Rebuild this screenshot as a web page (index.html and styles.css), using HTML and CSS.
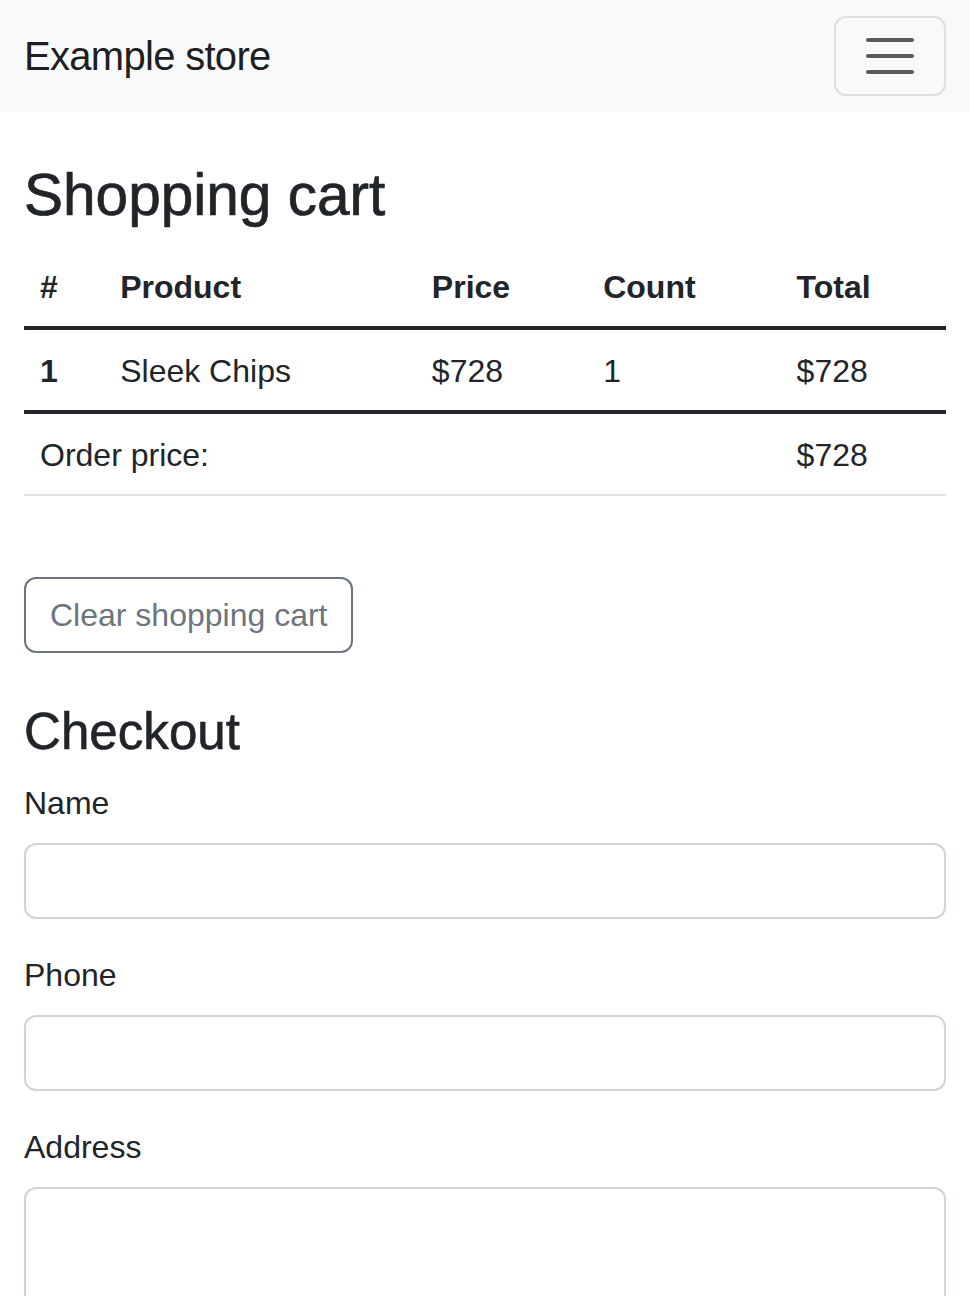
FILE: index.html
```html
<!DOCTYPE html>
<html lang="en">
<head>
<meta charset="utf-8">
<title>Example store</title>
<link rel="stylesheet" href="styles.css">
</head>
<body>
<nav class="navbar">
  <div class="nav-inner">
    <a class="brand" href="#">Example store</a>
    <button class="toggler" type="button" aria-label="Toggle navigation">
      <svg class="toggler-icon" viewBox="0 0 30 30" width="60" height="60" aria-hidden="true">
        <path d="M4 7h22M4 15h22M4 23h22" stroke="rgba(33,37,41,0.75)" stroke-width="2" stroke-linecap="round" stroke-miterlimit="10" fill="none"/>
      </svg>
    </button>
  </div>
</nav>
<main class="container">
  <h1 class="title">Shopping cart</h1>
  <table class="cart">
    <colgroup>
      <col class="c-num"><col class="c-product"><col class="c-price"><col class="c-count"><col class="c-total">
    </colgroup>
    <thead>
      <tr><th>#</th><th>Product</th><th>Price</th><th>Count</th><th>Total</th></tr>
    </thead>
    <tbody>
      <tr><th>1</th><td>Sleek Chips</td><td>$728</td><td>1</td><td>$728</td></tr>
    </tbody>
    <tfoot>
      <tr><td colspan="4">Order price:</td><td>$728</td></tr>
    </tfoot>
  </table>
  <div class="actions">
    <button class="btn-outline" type="button">Clear shopping cart</button>
  </div>
  <h2 class="subtitle">Checkout</h2>
  <form class="checkout">
    <div class="field">
      <label class="label" for="name">Name</label>
      <input class="control" id="name" type="text">
    </div>
    <div class="field">
      <label class="label" for="phone">Phone</label>
      <input class="control" id="phone" type="text">
    </div>
    <div class="field">
      <label class="label" for="address">Address</label>
      <textarea class="control area" id="address" rows="3"></textarea>
    </div>
  </form>
</main>
</body>
</html>
```
FILE: styles.css
```css
* { box-sizing: border-box; }
html, body { margin: 0; padding: 0; }
body {
  font-family: "Liberation Sans", Arial, sans-serif;
  font-size: 32px;
  line-height: 1.5;
  color: #212529;
  background: #fff;
}
.navbar {
  background: #f8f9fa;
  padding: 16px 0;
}
.nav-inner {
  display: flex;
  align-items: center;
  justify-content: space-between;
  padding: 0 24px;
}
.brand {
  font-size: 40px;
  line-height: 60px;
  padding: 10px 0;
  letter-spacing: -0.7px;
  color: rgba(0,0,0,0.9);
  text-decoration: none;
}
.toggler {
  width: 112px;
  height: 80px;
  padding: 8px 24px;
  border: 2px solid rgba(0,0,0,0.1);
  border-radius: 12px;
  background: transparent;
  display: flex;
  align-items: center;
  justify-content: center;
}
.toggler-icon { display: block; }
.container {
  padding: 48px 24px 0;
}
.title {
  font-size: 58.55px;
  font-weight: 500;
  line-height: 1.2;
  margin: 0 0 16px;
  -webkit-text-stroke: 0.7px #212529;
}
.cart {
  width: 100%;
  border-collapse: collapse;
  table-layout: fixed;
  margin-bottom: 0;
}
.c-num { width: 80px; }
.c-product { width: 311px; }
.c-price { width: 171px; }
.c-count { width: 193px; }
.c-total { width: 165px; }
.cart th, .cart td {
  padding: 17px 16px 15px;
  text-align: left;
  vertical-align: top;
  line-height: 48px;
  border-bottom: 2px solid #dee2e6;
}
.cart th { font-weight: 700; }
.cart thead th { border-bottom: 4px solid #212529; }
.cart tbody th, .cart tbody td { border-bottom: 4px solid #212529; }
.actions { margin-top: 81px; }
.btn-outline {
  font-family: inherit;
  font-size: 32px;
  line-height: 48px;
  padding: 12px 24px;
  color: #6c757d;
  background: transparent;
  border: 2px solid #6c757d;
  border-radius: 12px;
}
.subtitle {
  font-size: 51.13px;
  font-weight: 500;
  line-height: 1.2;
  margin: 48px 0 16px;
  -webkit-text-stroke: 0.6px #212529;
}
.checkout { margin: 0; }
.field { margin-bottom: 32px; }
.label {
  display: block;
  margin-bottom: 16px;
  line-height: 48px;
}
.control {
  display: block;
  width: 100%;
  height: 76px;
  padding: 12px 24px;
  font-family: inherit;
  font-size: 32px;
  line-height: 48px;
  color: #212529;
  background: #fff;
  border: 2px solid #ced4da;
  border-radius: 12px;
}
.area {
  height: 172px;
  resize: vertical;
}
```
